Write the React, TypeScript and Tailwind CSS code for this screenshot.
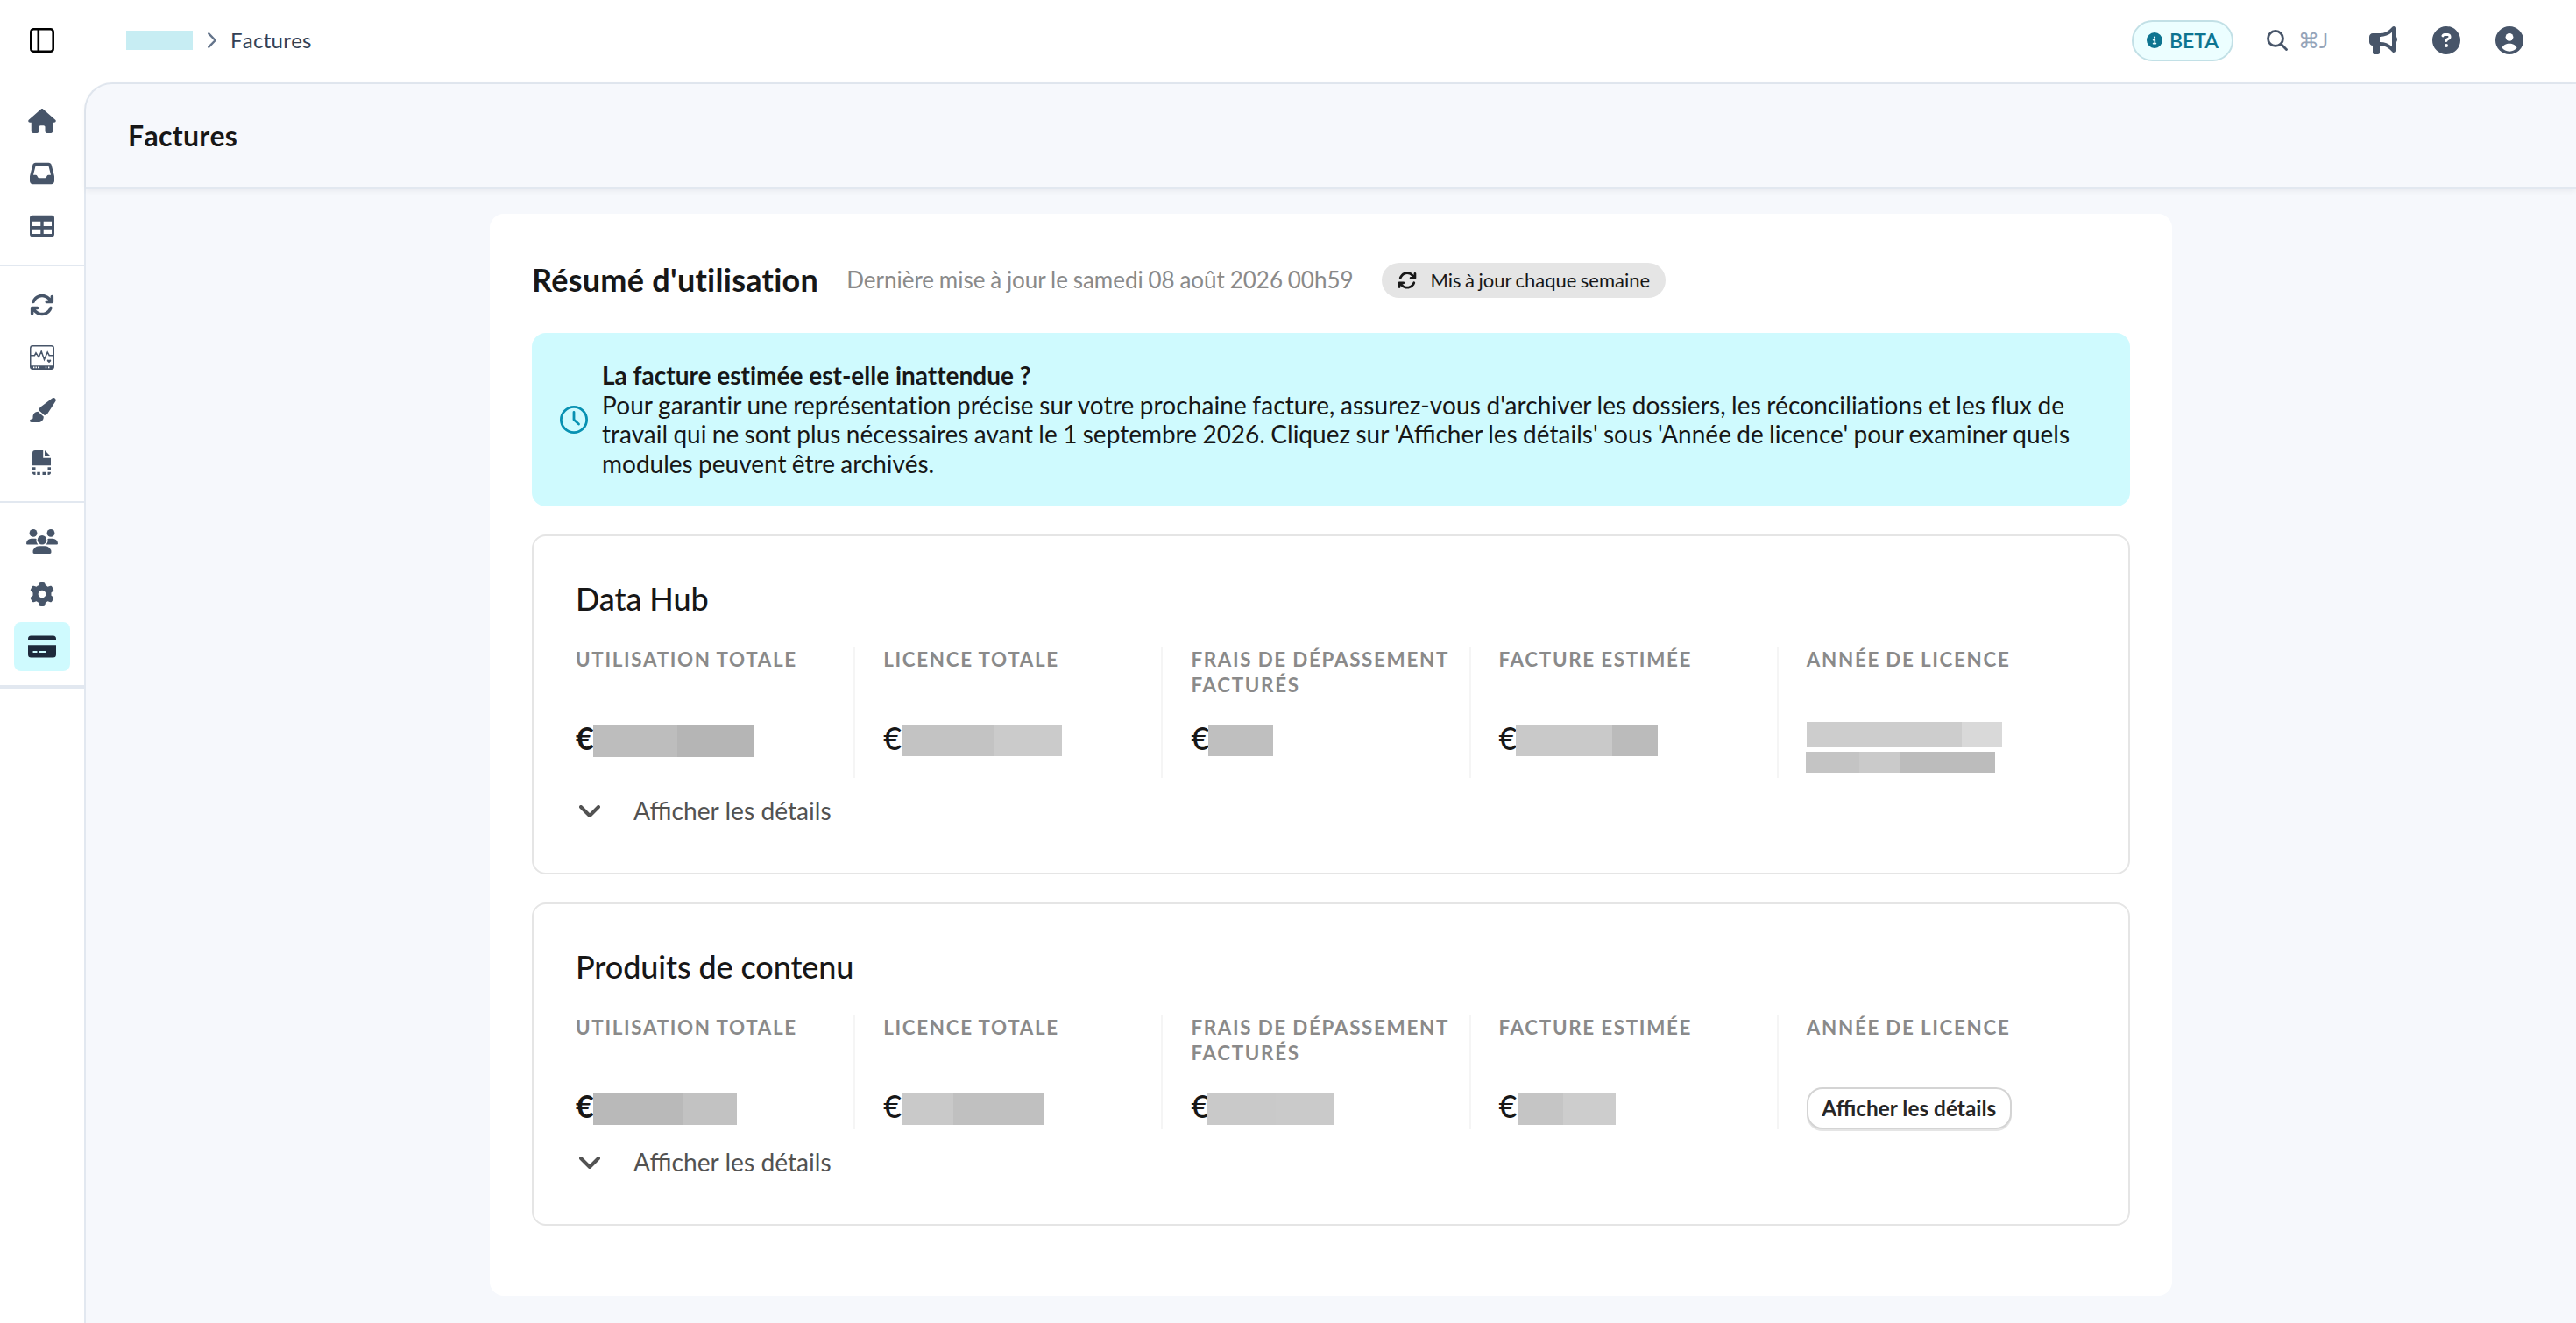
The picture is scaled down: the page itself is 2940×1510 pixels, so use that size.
import React from 'react';
import {
  FaHouse,
  FaInbox,
  FaArrowsRotate,
  FaPaintbrush,
  FaGear,
  FaBullhorn,
  FaCircleQuestion,
  FaCircleInfo,
} from 'react-icons/fa6';

type Segment = { w: number; color: string };
type Metric = { label: string; offset?: number; h?: number; bars?: Segment[]; bold?: boolean };

const DATA_HUB: Metric[] = [
  { label: 'Utilisation totale', bold: true, h: 36, bars: [{ w: 96, color: '#bdbdbd' }, { w: 88, color: '#b5b5b5' }] },
  { label: 'Licence totale', offset: 21, h: 35, bars: [{ w: 106, color: '#c3c3c3' }, { w: 77, color: '#cbcbcb' }] },
  { label: 'Frais de dépassement facturés', h: 35, bars: [{ w: 74, color: '#bfbfbf' }] },
  { label: 'Facture estimée', offset: 19.5, h: 35, bars: [{ w: 110, color: '#c9c9c9' }, { w: 52, color: '#bbbbbb' }] },
];

const CONTENT: Metric[] = [
  { label: 'Utilisation totale', bold: true, h: 36, bars: [{ w: 103, color: '#b9b9b9' }, { w: 61, color: '#c2c2c2' }] },
  { label: 'Licence totale', offset: 21, h: 36, bars: [{ w: 59, color: '#c9c9c9' }, { w: 104, color: '#c0c0c0' }] },
  { label: 'Frais de dépassement facturés', offset: 18.5, h: 36, bars: [{ w: 78, color: '#c9c9c9' }, { w: 66, color: '#cacaca' }] },
  { label: 'Facture estimée', offset: 22.5, h: 36, bars: [{ w: 51, color: '#c5c5c5' }, { w: 60, color: '#cdcdcd' }] },
];

function TableIcon() {
  return (
    <svg width="28" height="28" viewBox="0 0 28 28" fill="currentColor" fillRule="evenodd">
      <path d="M3 1.7h22a3 3 0 0 1 3 3v18.6a3 3 0 0 1-3 3H3a3 3 0 0 1-3-3V4.700a3 3 0 0 1 3-3ZM3 8.700v5.300h9.300V8.700ZM15.700 8.700v5.300H25V8.700ZM3 17.700v5.300h9.300v-5.300ZM15.700 17.700v5.300H25v-5.300Z" />
    </svg>
  );
}

function MonitorIcon() {
  return (
    <svg width="28" height="28" viewBox="0 0 28 28" fill="none" stroke="currentColor">
      <rect x=".75" y=".75" width="26.500" height="26.500" rx="2.700" strokeWidth="1.500" />
      <path d="M1 11.700h4.500l1.500-3 3.200 5 3-6.700 3.300 9.500 3.700-8.500 2 3.700H27" strokeWidth="1.500" />
      <path d="M1 23.200h26v1.800a2.300 2.300 0 0 1-2.300 2.300H3.300A2.300 2.300 0 0 1 1 25Z" fill="currentColor" stroke="none" />
      <path d="M22 20.300l-2.100-2.100a1.100 1.100 0 0 1 2.100-1.100 1.100 1.100 0 0 1 2.100 1.100Z" fill="currentColor" stroke="none" />
      <path d="M4 25.300h1.400M6.500 25.300h1.400M9 25.300h1.400M17.800 25.300h1.400M21 25.300h1.400" stroke="#fff" strokeWidth="1.800" />
    </svg>
  );
}

function FileDashedIcon() {
  return (
    <svg width="28" height="28" viewBox="0 0 28 28" fill="currentColor">
      <path d="M6 0h9.200v8.700H24v8.600H3V3a3 3 0 0 1 3-3Z" />
      <path d="M17 0l7 6.900h-7Z" />
      <path d="M3 19.200h3.500V23H3ZM20.500 19.200H24V23h-3.500ZM3 24.700h3.500V28H5.700A2.700 2.700 0 0 1 3 25.300ZM8.300 24.700h3.500V28H8.300ZM14.500 24.700H18.500V28h-4ZM20.500 24.700H24v.6a2.700 2.700 0 0 1-2.700 2.700h-.8Z" />
    </svg>
  );
}

function PeopleIcon() {
  return (
    <svg width="36" height="28" viewBox="0 0 36 28" fill="currentColor">
      <circle cx="8" cy="4.400" r="4.400" />
      <circle cx="28" cy="4.400" r="4.400" />
      <circle cx="18" cy="12.300" r="5.200" />
      <path d="M6 10.700h4.200a5 5 0 0 1 1.400.2 7.500 7.500 0 0 0 1.800 6.600H1.200A1.200 1.200 0 0 1 0 16.300a5.800 5.800 0 0 1 6-5.600ZM30 10.700h-4.200a5 5 0 0 0-1.400.2 7.500 7.500 0 0 1-1.800 6.600h12.200a1.200 1.200 0 0 0 1.200-1.200 5.800 5.800 0 0 0-6-5.600ZM14.500 19.200h7a7 7 0 0 1 7 7 1.800 1.800 0 0 1-1.500 1.800H9a1.800 1.800 0 0 1-1.500-1.800 7 7 0 0 1 7-7Z" />
    </svg>
  );
}

function CardIcon() {
  return (
    <svg width="32" height="26" viewBox="0 0 32 26" fill="currentColor" fillRule="evenodd">
      <path d="M3.600.5h24.800A3.500 3.500 0 0 1 32 4v2H0V4A3.500 3.500 0 0 1 3.600.5Z" />
      <path d="M0 11.300h32V22a3.500 3.500 0 0 1-3.600 3.500H3.600A3.500 3.500 0 0 1 0 22ZM6.300 18a1 1 0 0 0 0 2h3.400a1 1 0 0 0 0-2ZM13.300 18a1 1 0 0 0 0 2h6.700a1 1 0 0 0 0-2Z" />
    </svg>
  );
}

function UserIcon() {
  return (
    <svg width="32" height="32" viewBox="0 0 32 32">
      <circle cx="16" cy="16" r="16" fill="#475569" />
      <circle cx="16" cy="12.300" r="4.400" fill="#fff" />
      <path d="M7.500 24.600c1.200-3.200 4.700-4.900 8.500-4.900s7.300 1.700 8.500 4.900c-2 2.700-5 4.100-8.500 4.100s-6.500-1.400-8.500-4.100Z" fill="#fff" />
    </svg>
  );
}

function NavItem({ children, active }: { children: React.ReactNode; active?: boolean }) {
  return (
    <a
      className={
        active
          ? 'flex h-14 w-16 items-center justify-center rounded-lg bg-[#cffafe] text-[#1e293b]'
          : 'flex h-14 w-16 items-center justify-center rounded-lg text-[#475569]'
      }
    >
      {children}
    </a>
  );
}

function Sidebar() {
  return (
    <aside className="flex w-24 shrink-0 flex-col">
      <div className="flex h-[94px] items-center justify-center pb-[2px]">
        <svg width="28" height="28" viewBox="0 0 28 28" fill="none" stroke="#000" strokeWidth="2.600">
          <rect x="1.300" y="1.300" width="25.400" height="25.400" rx="3" />
          <path d="M9.800 1v26" />
        </svg>
      </div>
      <nav className="flex flex-col items-center gap-1 border-b-2 border-slate-200 py-4">
        <NavItem><FaHouse size={28} className="w-8" /></NavItem>
        <NavItem><FaInbox size={28} /></NavItem>
        <NavItem><TableIcon /></NavItem>
      </nav>
      <nav className="flex flex-col items-center gap-1 border-b-2 border-slate-200 py-4">
        <NavItem><FaArrowsRotate size={28} /></NavItem>
        <NavItem><MonitorIcon /></NavItem>
        <NavItem><FaPaintbrush size={28} className="w-8" /></NavItem>
        <NavItem><FileDashedIcon /></NavItem>
      </nav>
      <nav className="flex flex-col items-center gap-1 border-b-4 border-slate-200 py-4">
        <NavItem><PeopleIcon /></NavItem>
        <NavItem><FaGear size={28} /></NavItem>
        <NavItem active><CardIcon /></NavItem>
      </nav>
    </aside>
  );
}

function TopBar() {
  return (
    <header className="flex h-[94px] shrink-0 items-center pr-[60px] pb-[2px] pl-12 text-[#475569]">
      <div className="h-[22px] w-[76px] bg-[#c7edf3]" />
      <svg className="ml-[17px]" width="10" height="18" viewBox="0 0 10 18" fill="none" stroke="#64748b" strokeWidth="2.400" strokeLinecap="round" strokeLinejoin="round">
        <path d="M1.300 1.300L8.700 9l-7.400 7.700" />
      </svg>
      <span className="ml-4 text-2xl leading-none tracking-[0.25px] text-[#334155] [font-kerning:none]">Factures</span>

      <div className="ml-auto flex items-center">
        <div className="flex h-[47px] w-[116px] items-center justify-center gap-2 rounded-full border-2 border-[#c2e0e6] bg-[#ecfeff] text-[#0e7490]">
          <FaCircleInfo size={18} />
          <span className="text-[23px] leading-none font-semibold">BETA</span>
        </div>
        <svg className="ml-[38px]" width="24" height="24" viewBox="0 0 24 24" fill="none" stroke="currentColor" strokeWidth="2.800" strokeLinecap="round">
          <circle cx="10" cy="9.900" r="8.500" />
          <path d="M16.300 16.200l6.200 6.300" />
        </svg>
        <span className="ml-3 w-[34px] text-2xl leading-none whitespace-nowrap text-[#94a3b8]">⌘J</span>
        <FaBullhorn size={32} className="ml-[47px]" />
        <FaCircleQuestion size={32} className="ml-10" />
        <div className="ml-10"><UserIcon /></div>
      </div>
    </header>
  );
}

function Bars({ bars, h }: { bars: Segment[]; h: number }) {
  return (
    <div className="relative flex" style={{ height: h }}>
      {bars.map((b, i) => (
        <div key={i} style={{ width: b.w, background: b.color }} />
      ))}
    </div>
  );
}

function Cell({ label, last, children }: { label: string; last?: boolean; children: React.ReactNode }) {
  return (
    <div className={last ? '' : 'border-r-2 border-[#f5f5f5]'}>
      <div className="h-[57.6px] text-[22.4px] leading-[28.8px] font-bold tracking-[1.68px] text-[#8a8a8a] uppercase [word-spacing:-0.8px]">{label}</div>
      <div className="mt-6">{children}</div>
    </div>
  );
}

function UsageCard({ title, metrics, children }: { title: string; metrics: Metric[]; children: React.ReactNode }) {
  return (
    <section className="mt-8 rounded-2xl border-2 border-[#e5e5e5] p-12">
      <h2 className="text-4xl leading-[46px] font-medium tracking-[-0.1px]">{title}</h2>
      <div className="mt-[33px] grid grid-cols-5 gap-8">
        {metrics.map((m) => (
          <Cell key={m.label} label={m.label}>
            <div className="flex h-[43.2px] text-4xl leading-[43.2px]">
              <span className={m.bold ? 'font-bold' : 'font-medium'} style={{ width: m.offset ?? 20 }}>€</span>
              <div className="pt-[7.4px]"><Bars bars={m.bars || []} h={m.h || 36} /></div>
            </div>
          </Cell>
        ))}
        <Cell label="Année de licence" last>{children}</Cell>
      </div>
      <div className="mt-4 flex h-11 items-center text-[28.2px] text-[#525252]">
        <svg className="ml-1" width="24" height="14" viewBox="0 0 24 14" fill="none" stroke="currentColor" strokeWidth="4" strokeLinecap="round" strokeLinejoin="round">
          <path d="M2 2l10 10L22 2" />
        </svg>
        <span className="ml-[38px] leading-[33.6px]">Afficher les détails</span>
      </div>
    </section>
  );
}

export default function App() {
  return (
    <div className="flex h-[1510px] w-[2940px] overflow-hidden bg-white font-['Lato',sans-serif] text-[#171717]">
      <Sidebar />
      <div className="flex min-w-0 flex-1 flex-col">
        <TopBar />
        <main className="flex flex-1 flex-col rounded-tl-[32px] border-t-2 border-l-2 border-slate-200 bg-[#f6f8fc]">
          <div className="flex h-[120px] shrink-0 items-center rounded-tl-[30px] border-b-2 border-slate-200 pl-12 shadow-[0_2px_6px_rgba(15,23,42,0.06)]">
            <h1 className="text-[32px] leading-none font-bold tracking-[0.3px] [font-kerning:none]">Factures</h1>
          </div>

          <div className="mx-auto mt-7 w-[1920px] rounded-2xl bg-white px-12 pt-12 pb-20">
            <div className="flex h-14 items-center">
              <h2 className="text-4xl leading-[43.2px] font-bold tracking-[0.27px] [font-variant-ligatures:none]">Résumé d'utilisation</h2>
              <p className="ml-8 text-[26px] leading-[33.6px] text-[#8a8a8a] [word-spacing:-0.9px]">Dernière mise à jour le samedi 08 août 2026 00h59</p>
              <div className="ml-8 flex h-10 items-center rounded-full bg-[#e5e5e5] px-[18px] text-[22px] [word-spacing:-1.2px]">
                <FaArrowsRotate size={22} />
                <span className="ml-4 leading-none">Mis à jour chaque semaine</span>
              </div>
            </div>

            <div className="mt-8 flex items-center gap-4 rounded-2xl bg-[#cffafe] p-8">
              <svg className="shrink-0" width="32" height="32" viewBox="0 0 32 32" fill="none" stroke="#0891b2" strokeWidth="2.800" strokeLinecap="round" strokeLinejoin="round">
                <circle cx="16" cy="16" r="14.600" />
                <path d="M16 7.500V16l5.500 5" />
              </svg>
              <div className="text-[28px] leading-[33.6px]">
                <div className="font-bold [font-variant-ligatures:none]">La facture estimée est-elle inattendue ?</div>
                <div className="[word-spacing:-0.8px]">
                  <span className="tracking-[0.1px] [font-variant-ligatures:none]">Pour garantir une représentation précise sur votre prochaine facture, assurez-vous d'archiver les dossiers, les réconciliations et les flux de</span><br />
                  travail qui ne sont plus nécessaires avant le 1 septembre 2026. Cliquez sur 'Afficher les détails' sous 'Année de licence' pour examiner quels<br />
                  modules peuvent être archivés.
                </div>
              </div>
            </div>

            <UsageCard title="Data Hub" metrics={DATA_HUB}>
              <div className="flex h-[67.2px] flex-col gap-[5px] pt-[3.4px]">
                <Bars h={29} bars={[{ w: 177, color: '#cdcdcd' }, { w: 46, color: '#d9d9d9' }]} />
                <div className="-ml-px">
                  <Bars h={24} bars={[{ w: 61, color: '#c4c4c4' }, { w: 47, color: '#cacaca' }, { w: 108, color: '#bcbcbc' }]} />
                </div>
              </div>
            </UsageCard>

            <UsageCard title="Produits de contenu" metrics={CONTENT}>
              <button className="flex h-12 w-[234px] items-center justify-center rounded-[18px] border-2 border-[#d4d4d4] bg-white text-[24.4px] leading-none font-bold whitespace-nowrap text-[#262626] shadow-[0_2px_0_#e5e5e5]">
                Afficher les détails
              </button>
            </UsageCard>
          </div>
        </main>
      </div>
    </div>
  );
}
